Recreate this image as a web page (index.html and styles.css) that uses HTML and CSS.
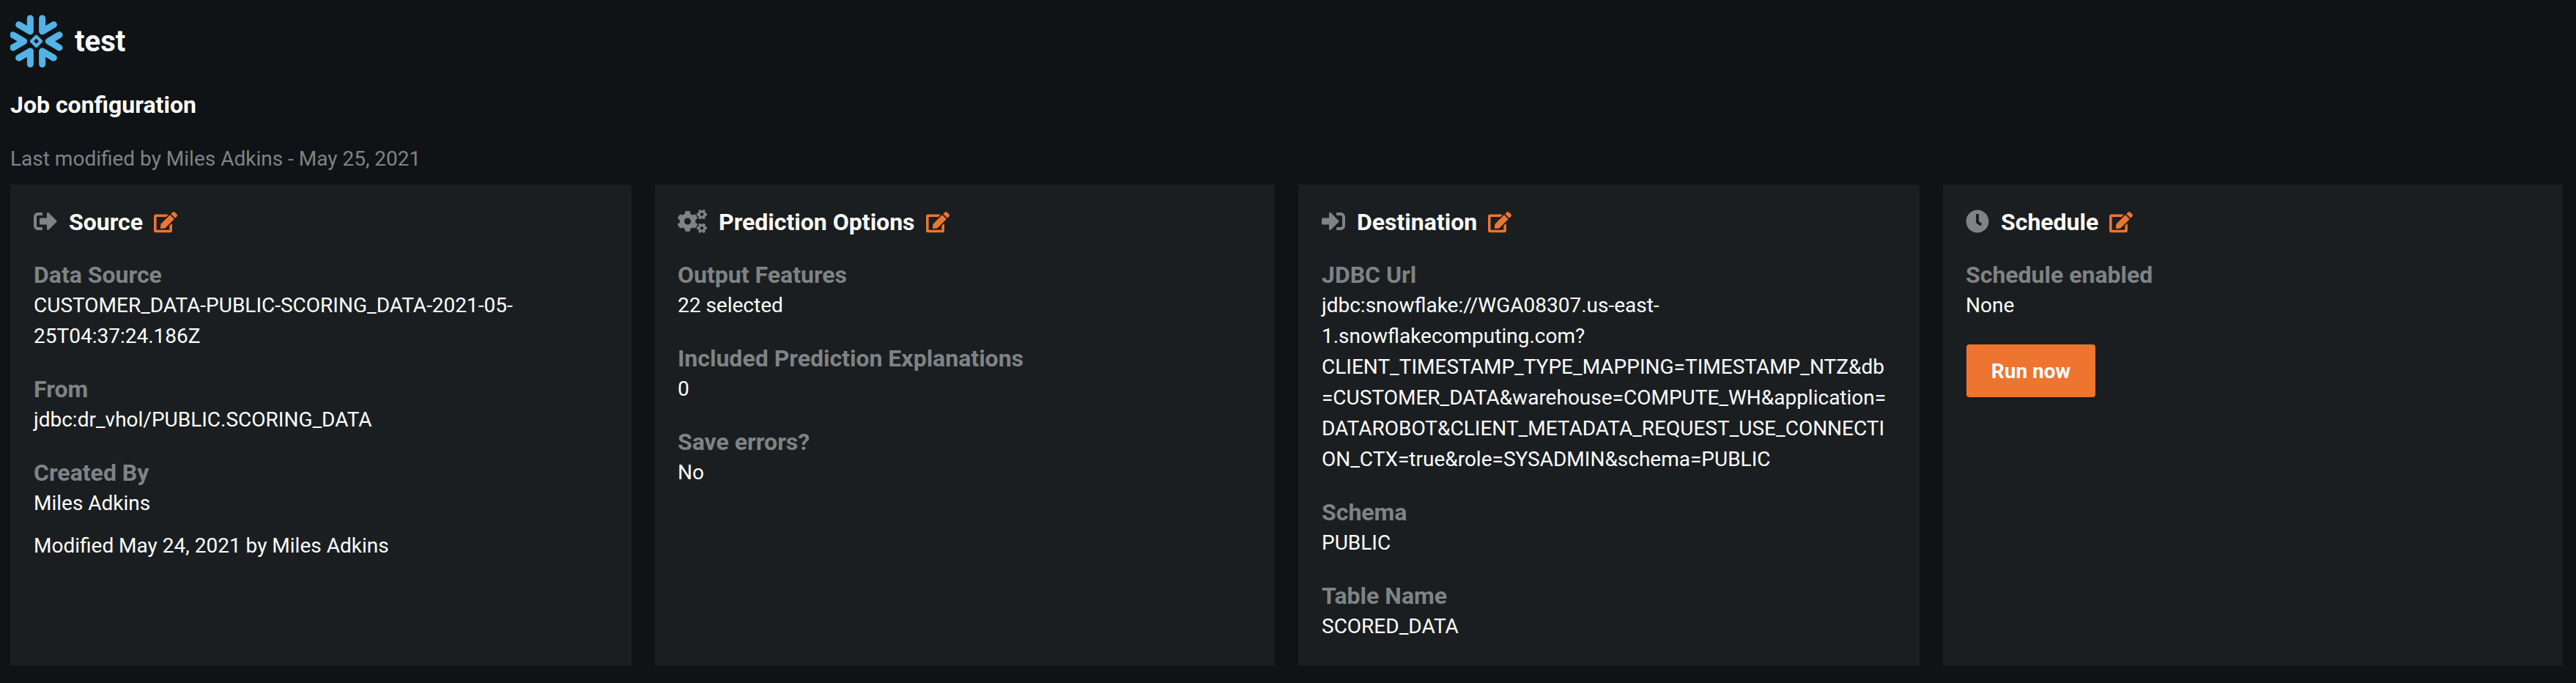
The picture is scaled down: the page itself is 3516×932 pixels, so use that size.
FILE: index.html
```html
<!DOCTYPE html>
<html lang="en">
<head>
<meta charset="utf-8">
<title>test - Job configuration</title>
<link rel="stylesheet" href="styles.css">
</head>
<body>
<svg class="sprite" aria-hidden="true">
  <symbol id="icon-edit" viewBox="0 0 576 512"><path d="M402.600 83.200l90.200 90.200c3.800 3.800 3.800 10 0 13.800L274.400 405.600l-92.800 10.300c-12.400 1.400-22.900-9.100-21.500-21.500l10.300-92.800L388.800 83.200c3.800-3.800 10-3.800 13.800 0zm162-22.900l-48.800-48.800c-15.200-15.200-39.900-15.200-55.200 0l-35.400 35.400c-3.800 3.800-3.800 10 0 13.800l90.200 90.200c3.800 3.800 10 3.800 13.800 0l35.400-35.400c15.200-15.300 15.200-40 0-55.200zM384 346.200V448H64V128h229.800c3.200 0 6.200-1.300 8.500-3.500l40-40c7.600-7.600 2.200-20.500-8.500-20.500H48C21.500 64 0 85.500 0 112v352c0 26.500 21.500 48 48 48h352c26.500 0 48-21.500 48-48V306.200c0-10.700-12.900-16-20.500-8.500l-40 40c-2.200 2.300-3.500 5.300-3.500 8.500z"/></symbol>
</svg>
<main class="page">
  <header class="page-header">
    <svg class="logo" viewBox="42 30 216 216"><path class="logo-arms" d="M77 71L124 98.500V45M173 45V98.500L220 71M53 113L98 139L53 165M243 113L199 139L243 165M77 207L124 179.500V233M173 233V179.500L220 207"/><path class="logo-core" d="M148.500 119.500L168 139L148.500 158.500L129 139Z"/></svg>
    <h1 class="page-title">test</h1>
  </header>
  <h2 class="section-title">Job configuration</h2>
  <p class="modified">Last modified by Miles Adkins - May 25, 2021</p>
  <div class="cards">
    <section class="card">
      <div class="card-header">
        <svg class="icon" viewBox="0 0 512 512"><path d="M497 273L329 441c-15 15-41 4.500-41-17v-96H152c-13.300 0-24-10.700-24-24v-96c0-13.300 10.700-24 24-24h136V88c0-21.400 25.900-32 41-17l168 168c9.300 9.400 9.300 24.600 0 34zM192 436v-40c0-6.600-5.400-12-12-12H96c-17.700 0-32-14.300-32-32V160c0-17.700 14.300-32 32-32h84c6.600 0 12-5.400 12-12V76c0-6.600-5.400-12-12-12H96c-53 0-96 43-96 96v192c0 53 43 96 96 96h84c6.600 0 12-5.400 12-12z"/></svg>
        <h3 class="card-title">Source</h3>
        <svg class="edit"><use href="#icon-edit"/></svg>
      </div>
      <div class="field"><div class="label">Data Source</div><div class="value">CUSTOMER_DATA-PUBLIC-SCORING_DATA-2021-05-<br>25T04:37:24.186Z</div></div>
      <div class="field"><div class="label">From</div><div class="value">jdbc:dr_vhol/PUBLIC.SCORING_DATA</div></div>
      <div class="field"><div class="label">Created By</div><div class="value">Miles Adkins</div><div class="value note">Modified May 24, 2021 by Miles Adkins</div></div>
    </section>
    <section class="card">
      <div class="card-header">
        <svg class="icon icon-wide" viewBox="0 0 640 512"><path d="M512.100 191l-8.200 14.300c-3 5.300-9.400 7.500-15.100 5.400-11.800-4.400-22.600-10.700-32.100-18.600-4.600-3.800-5.800-10.500-2.800-15.700l8.200-14.300c-6.900-8-12.300-17.300-15.900-27.400h-16.500c-6 0-11.200-4.300-12.200-10.300-2-12-2.100-24.600 0-37.100 1-6 6.200-10.400 12.200-10.400h16.500c3.600-10.100 9-19.400 15.900-27.400l-8.200-14.300c-3-5.200-1.900-11.900 2.800-15.700 9.500-7.900 20.400-14.200 32.100-18.600 5.700-2.100 12.100.1 15.100 5.400l8.200 14.300c10.500-1.900 21.200-1.900 31.700 0L552 6.300c3-5.300 9.400-7.500 15.100-5.400 11.800 4.400 22.600 10.700 32.100 18.600 4.600 3.800 5.800 10.500 2.800 15.700l-8.200 14.300c6.900 8 12.300 17.300 15.900 27.400h16.500c6 0 11.200 4.300 12.200 10.300 2 12 2.100 24.600 0 37.100-1 6-6.200 10.400-12.200 10.400h-16.500c-3.600 10.100-9 19.400-15.900 27.400l8.200 14.300c3 5.200 1.900 11.900-2.800 15.700-9.500 7.900-20.400 14.200-32.100 18.600-5.700 2.100-12.100-.1-15.100-5.400l-8.200-14.300c-10.400 1.900-21.200 1.900-31.700 0zm-10.500-58.800c38.500 29.600 82.400-14.300 52.800-52.800-38.500-29.700-82.400 14.300-52.800 52.800zM386.300 286.100l33.700 16.800c10.100 5.800 14.500 18.100 10.500 29.100-8.900 24.200-26.400 46.400-42.600 65.800-7.400 8.900-20.200 11.100-30.300 5.300l-29.100-16.800c-16 13.700-34.600 24.600-54.900 31.700v33.600c0 11.600-8.300 21.600-19.700 23.600-24.600 4.200-50.400 4.400-75.900 0-11.500-2-20-11.900-20-23.600V418c-20.300-7.200-38.900-18-54.900-31.700L74 403c-10 5.800-22.900 3.600-30.300-5.300-16.200-19.400-33.300-41.600-42.200-65.700-4-10.900.4-23.200 10.500-29.100l33.300-16.800c-3.900-20.900-3.900-42.400 0-63.400L12 205.800c-10.100-5.800-14.600-18.100-10.500-29 8.900-24.200 26-46.400 42.200-65.800 7.400-8.900 20.200-11.100 30.300-5.300l29.100 16.800c16-13.700 34.600-24.600 54.900-31.700V57.100c0-11.500 8.200-21.500 19.600-23.500 24.600-4.200 50.500-4.400 76-.1 11.500 2 20 11.900 20 23.600v33.600c20.300 7.200 38.900 18 54.900 31.700l29.100-16.800c10-5.800 22.900-3.600 30.300 5.300 16.200 19.400 33.200 41.600 42.100 65.800 4 10.900.1 23.200-10 29.100l-33.700 16.800c3.900 21 3.900 42.500 0 63.500zm-117.600 21.100c59.200-77-28.700-164.900-105.700-105.700-59.200 77 28.700 164.900 105.700 105.700zm243.400 182.700l-8.200 14.300c-3 5.300-9.400 7.500-15.100 5.400-11.800-4.400-22.600-10.700-32.100-18.600-4.600-3.800-5.800-10.500-2.800-15.700l8.200-14.300c-6.900-8-12.300-17.300-15.900-27.400h-16.500c-6 0-11.200-4.300-12.200-10.300-2-12-2.100-24.600 0-37.100 1-6 6.200-10.400 12.200-10.400h16.500c3.600-10.100 9-19.400 15.900-27.400l-8.200-14.300c-3-5.200-1.900-11.900 2.800-15.700 9.500-7.900 20.400-14.200 32.100-18.600 5.700-2.100 12.100.1 15.100 5.400l8.200 14.300c10.500-1.900 21.200-1.900 31.700 0l8.200-14.300c3-5.300 9.400-7.500 15.100-5.400 11.800 4.400 22.600 10.700 32.100 18.600 4.600 3.800 5.800 10.500 2.800 15.700l-8.200 14.300c6.900 8 12.300 17.300 15.900 27.400h16.500c6 0 11.200 4.300 12.200 10.300 2 12 2.100 24.600 0 37.100-1 6-6.200 10.400-12.200 10.400h-16.500c-3.600 10.100-9 19.400-15.900 27.400l8.200 14.300c3 5.200 1.900 11.900-2.800 15.700-9.500 7.900-20.400 14.200-32.100 18.600-5.700 2.100-12.100-.1-15.100-5.400l-8.200-14.300c-10.400 1.900-21.200 1.900-31.700 0zM501.600 431c38.500 29.600 82.400-14.300 52.800-52.800-38.500-29.600-82.400 14.300-52.800 52.800z"/></svg>
        <h3 class="card-title">Prediction Options</h3>
        <svg class="edit"><use href="#icon-edit"/></svg>
      </div>
      <div class="field"><div class="label">Output Features</div><div class="value">22 selected</div></div>
      <div class="field"><div class="label">Included Prediction Explanations</div><div class="value">0</div></div>
      <div class="field"><div class="label">Save errors?</div><div class="value">No</div></div>
    </section>
    <section class="card">
      <div class="card-header">
        <svg class="icon" viewBox="0 0 512 512"><path d="M416 448h-84c-6.600 0-12-5.400-12-12v-40c0-6.600 5.400-12 12-12h84c17.700 0 32-14.300 32-32V160c0-17.700-14.300-32-32-32h-84c-6.600 0-12-5.400-12-12V76c0-6.600 5.400-12 12-12h84c53 0 96 43 96 96v192c0 53-43 96-96 96zm-47-209L201 71c-15-15-41-4.500-41 17v96H24c-13.300 0-24 10.700-24 24v96c0 13.300 10.700 24 24 24h136v96c0 21.500 26 32 41 17l168-168c9.300-9.400 9.300-24.600 0-34z"/></svg>
        <h3 class="card-title">Destination</h3>
        <svg class="edit"><use href="#icon-edit"/></svg>
      </div>
      <div class="field"><div class="label">JDBC Url</div><div class="value">jdbc:snowflake://WGA08307.us-east-<br>1.snowflakecomputing.com?<br>CLIENT_TIMESTAMP_TYPE_MAPPING=TIMESTAMP_NTZ&amp;db<br>=CUSTOMER_DATA&amp;warehouse=COMPUTE_WH&amp;application=<br>DATAROBOT&amp;CLIENT_METADATA_REQUEST_USE_CONNECTI<br>ON_CTX=true&amp;role=SYSADMIN&amp;schema=PUBLIC</div></div>
      <div class="field"><div class="label">Schema</div><div class="value">PUBLIC</div></div>
      <div class="field"><div class="label">Table Name</div><div class="value">SCORED_DATA</div></div>
    </section>
    <section class="card">
      <div class="card-header">
        <svg class="icon" viewBox="0 0 512 512"><path d="M256,8C119,8,8,119,8,256S119,504,256,504,504,393,504,256,393,8,256,8Zm92.490,313h0l-20,25a16,16,0,0,1-22.490,2.500h0l-67-49.720a40,40,0,0,1-15-31.230V112a16,16,0,0,1,16-16h32a16,16,0,0,1,16,16V256l58,42.500A16,16,0,0,1,348.490,321Z"/></svg>
        <h3 class="card-title">Schedule</h3>
        <svg class="edit"><use href="#icon-edit"/></svg>
      </div>
      <div class="field"><div class="label">Schedule enabled</div><div class="value">None</div></div>
      <button class="run" type="button">Run now</button>
    </section>
  </div>
</main>
</body>
</html>
```
FILE: styles.css
```css
* {
  box-sizing: border-box;
}

body {
  margin: 0;
  background: #0f1316;
  color: #fff;
  font: 28px/42px Roboto, sans-serif;
}

h1, h2, h3, p {
  margin: 0;
}

.sprite {
  display: none;
}

.page {
  height: 932px;
  padding: 20px 18px 24px 14px;
  display: flex;
  flex-direction: column;
}

.page-header {
  display: flex;
  align-items: center;
  gap: 16px;
  height: 72px;
}

.logo {
  width: 72px;
  height: 72px;
}

.logo path {
  fill: none;
  stroke: #53b3e6;
  stroke-linecap: round;
  stroke-linejoin: round;
}

.logo .logo-arms {
  stroke-width: 27;
}

.logo .logo-core {
  stroke-width: 13;
}

.page-title {
  padding-top: 2px;
  font-size: 40px;
  line-height: 48px;
  font-weight: 700;
}

.section-title {
  margin-top: 31px;
  font-size: 32px;
  line-height: 40px;
  font-weight: 700;
}

.modified {
  margin-top: 33px;
  color: #7f8385;
}

.cards {
  height: 656px;
  margin-top: 14px;
  display: grid;
  grid-template-columns: 848px 846px 848px 846px;
  gap: 32px;
}

.card {
  padding: 32px;
  background: #1a1e20;
}

.card:nth-child(even) {
  padding-left: 31px;
}

.card-header {
  display: flex;
  align-items: center;
  height: 38px;
  margin-bottom: 33px;
}

.icon {
  width: 32px;
  height: 32px;
  margin-right: 16px;
  margin-top: -2px;
  fill: #7f8385;
}

.icon-wide {
  width: 40px;
}

.card-title {
  font-size: 32px;
  line-height: 38px;
  font-weight: 700;
}

.edit {
  width: 32px;
  height: 28.4px;
  margin-left: 15px;
  margin-top: 1px;
  fill: #ee7530;
}

.field {
  margin-bottom: 31px;
}

.field:last-child {
  margin-bottom: 0;
}

.label {
  color: #7f8385;
  font-size: 32px;
  line-height: 40px;
  font-weight: 700;
}

.value {
  padding-top: 1px;
}

.note {
  margin-top: 15px;
}

.run {
  display: block;
  width: 176px;
  height: 72px;
  margin-top: 32px;
  margin-left: 1px;
  padding: 2px 0 0;
  border: 0;
  border-radius: 4px;
  background: #ee7530;
  color: #fff;
  font: 700 28px/42px Roboto, sans-serif;
}
```
